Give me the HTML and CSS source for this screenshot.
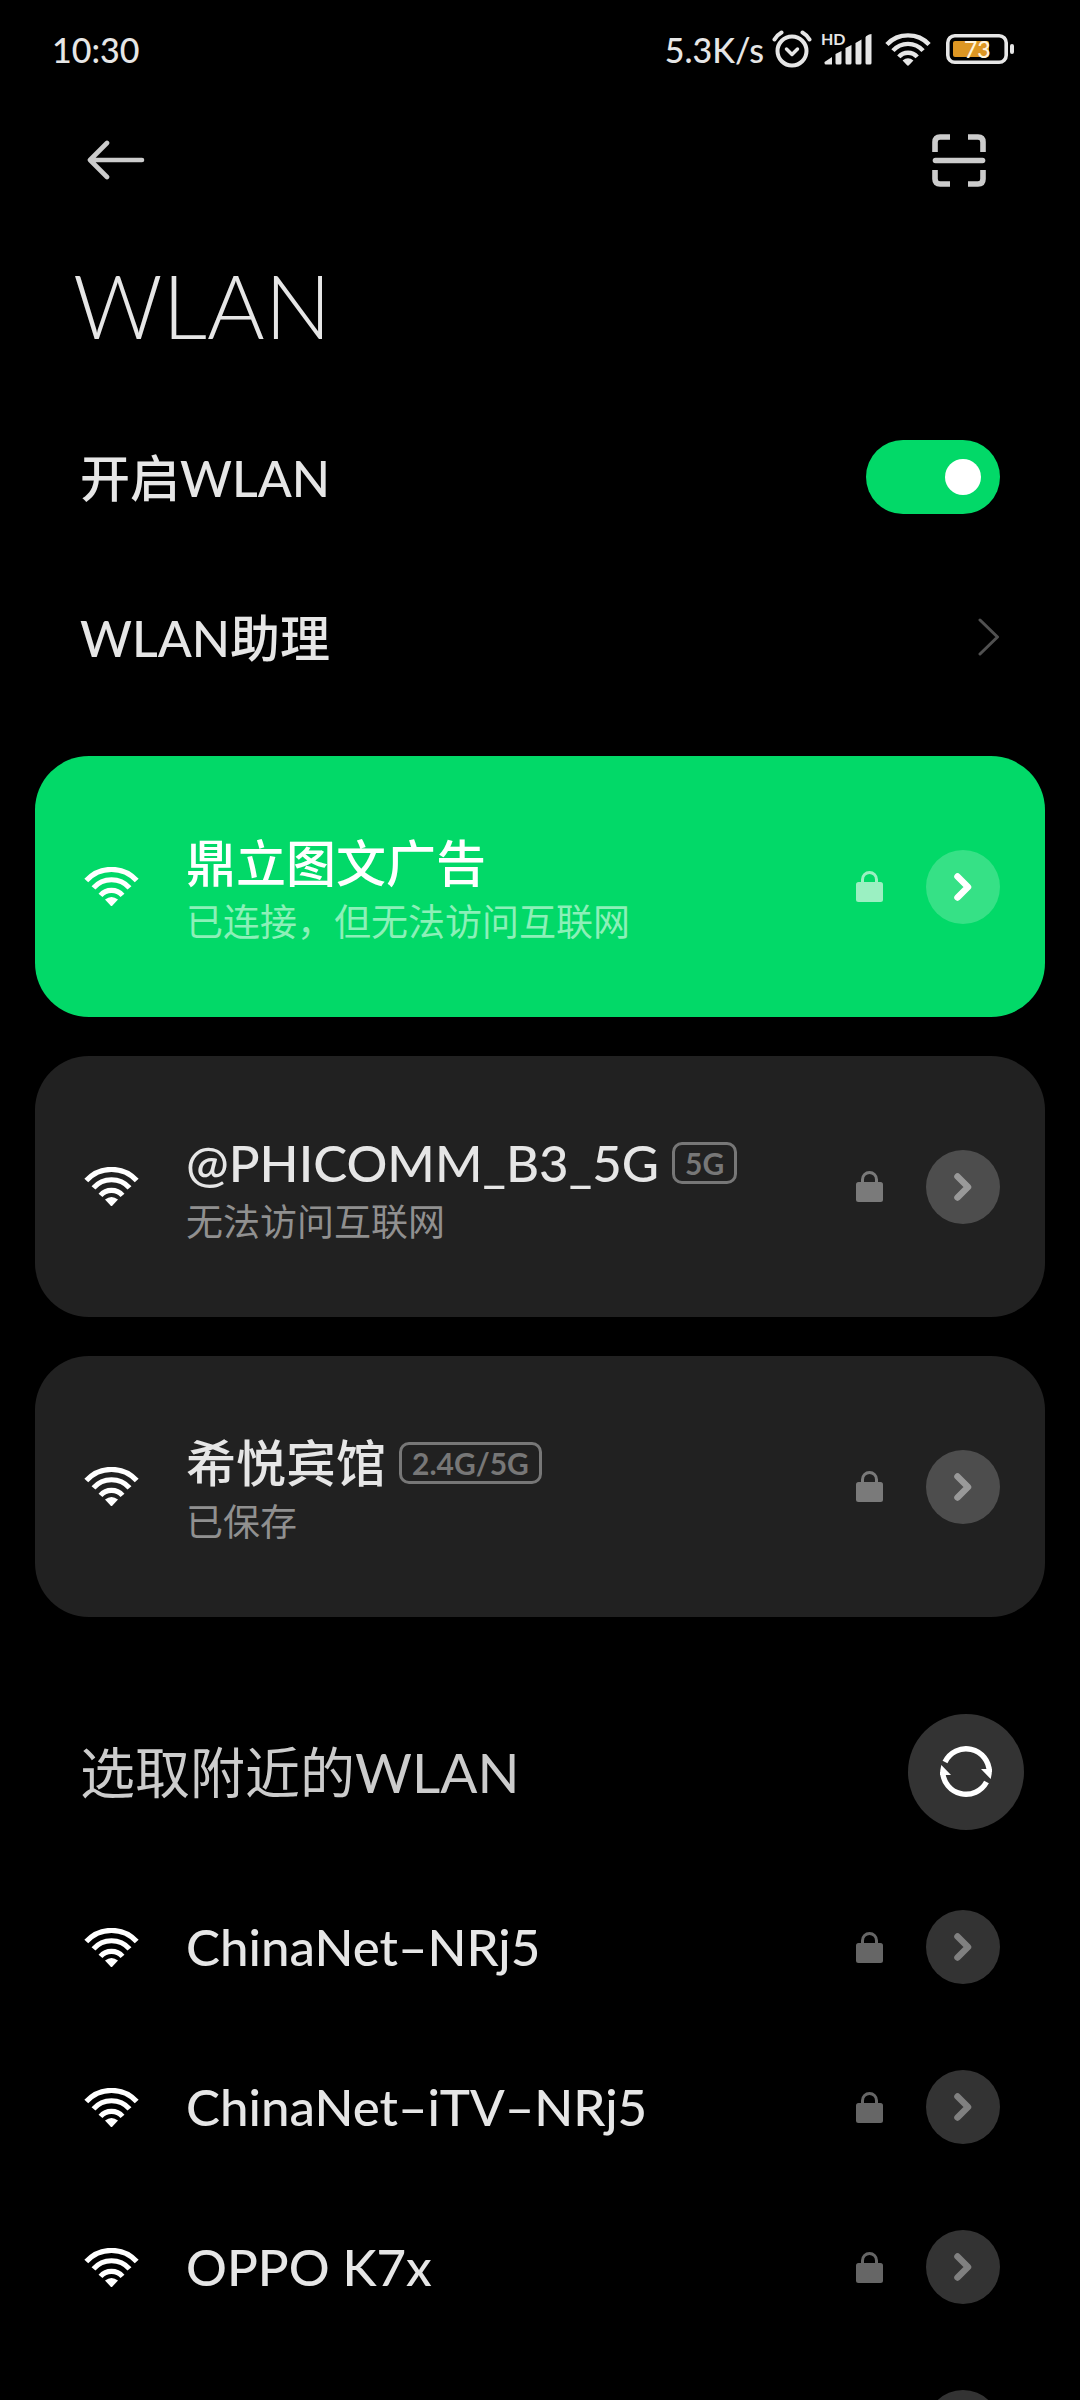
FILE: index.html
```html
<!DOCTYPE html>
<html lang="zh-CN">
<head>
<meta charset="utf-8">
<meta name="viewport" content="width=device-width, initial-scale=1">
<title>WLAN</title>
<link rel="stylesheet" href="styles.css">
</head>
<body>
<svg class="sprite" aria-hidden="true">
  <symbol id="wifi" viewBox="0 0 55 39">
    <path d="M2.3 13.6A34 34 0 0 1 52.7 13.6M9.5 20.9A24 24 0 0 1 45.5 20.9M16.5 28.4A14.5 14.5 0 0 1 38.5 28.4" fill="none" stroke="currentColor" stroke-width="5.2"/>
    <path d="M21 32.6Q27.500 27.400 34 32.6L27.500 39.500Z" fill="currentColor"/>
  </symbol>
  <symbol id="lock" viewBox="0 0 27 31">
    <rect y="11" width="27" height="20" rx="2.500" fill="currentColor"/>
    <path d="M6.500 11V8.500a7 7 0 0 1 14 0V11" fill="none" stroke="currentColor" stroke-width="3"/>
  </symbol>
  <symbol id="more" viewBox="0 0 18 28">
    <path d="M3.500 3.500L14 14L3.500 24.500" fill="none" stroke="currentColor" stroke-width="6.5" stroke-linecap="round" stroke-linejoin="round"/>
  </symbol>
</svg>
<div class="screen">
  <header class="status">
    <time class="clock">10:30</time>
    <div class="indicators">
      <span class="speed">5.3K/s</span>
      <svg class="alarm" viewBox="0 0 40 38" fill="none" stroke="currentColor">
        <circle cx="20" cy="21" r="14.500" stroke-width="4"/>
        <path d="M2.500 9.500Q5 5 9.500 2.500M37.500 9.500Q35 5 30.500 2.500" stroke-width="4" stroke-linecap="round"/>
        <path d="M14.500 19L20 24.500L25.500 19" stroke-width="3.500" stroke-linecap="round" stroke-linejoin="round"/>
      </svg>
      <svg class="signal" viewBox="0 0 50 34" fill="currentColor">
        <text class="hd" x="-1" y="13">HD</text>
        <path d="M2.500 30L10 25V32.500H4Q2.500 32.500 2.500 31ZM13.500 22L19.500 19V31Q19.500 32.500 18 32.500H15Q13.500 32.500 13.500 31ZM23.500 16L29.500 13V31Q29.500 32.500 28 32.500H25Q23.500 32.500 23.500 31ZM33.500 11L39.500 7.500V31Q39.500 32.500 38 32.500H35Q33.500 32.500 33.500 31ZM43.500 5.500Q44 3 49.500 2V31Q49.500 32.500 48 32.500H45Q43.500 32.500 43.500 31Z"/>
      </svg>
      <svg class="wifi-small" viewBox="0 0 55 39"><use href="#wifi"/></svg>
      <svg class="battery" viewBox="0 0 68 30">
        <rect x="1.800" y="1.800" width="58.400" height="26.400" rx="7" fill="none" stroke="currentColor" stroke-width="3.600"/>
        <rect x="64" y="10" width="4" height="10" rx="2" fill="currentColor"/>
        <rect x="7" y="7" width="36" height="16" rx="2" fill="#dd9623"/>
        <text class="level" x="18" y="23.500">73</text>
      </svg>
    </div>
  </header>

  <nav class="toolbar">
    <button class="tool" type="button" aria-label="返回">
      <svg class="back" viewBox="0 0 58 40"><path d="M20 3L3 20L20 37M4 20H55" fill="none" stroke="currentColor" stroke-width="4.600" stroke-linecap="round" stroke-linejoin="round"/></svg>
    </button>
    <button class="tool" type="button" aria-label="扫一扫">
      <svg class="scan" viewBox="0 0 54 53" fill="none" stroke="currentColor" stroke-width="5.600"><path d="M3 18V8Q3 3 8 3H18M36 3H46Q51 3 51 8V18M51 36V45Q51 50 46 50H36M18 50H8Q3 50 3 45V36"/><path d="M3.500 26.500H50.500" stroke-linecap="round"/></svg>
    </button>
  </nav>

  <main class="content">
    <h1 class="title">WLAN</h1>

    <div class="setting">
      <label class="setting-name" for="wlan-on">开启WLAN</label>
      <input class="switch" id="wlan-on" type="checkbox" role="switch" checked>
    </div>
    <a class="setting" href="#assistant">
      <span class="setting-name">WLAN助理</span>
      <svg class="chevron" viewBox="0 0 22 38"><path d="M2 2L19.500 19L2 36" fill="none" stroke="currentColor" stroke-width="3" stroke-linecap="round" stroke-linejoin="round"/></svg>
    </a>

    <ul class="known">
      <li class="network card connected">
        <svg class="wifi"><use href="#wifi"/></svg>
        <div class="info">
          <div class="name">鼎立图文广告</div>
          <div class="state">已连接，但无法访问互联网</div>
        </div>
        <svg class="lock"><use href="#lock"/></svg>
        <button class="details" type="button" aria-label="网络详情"><svg class="more"><use href="#more"/></svg></button>
      </li>
      <li class="network card">
        <svg class="wifi"><use href="#wifi"/></svg>
        <div class="info">
          <div class="name latin">@PHICOMM_B3_5G <span class="band">5G</span></div>
          <div class="state">无法访问互联网</div>
        </div>
        <svg class="lock"><use href="#lock"/></svg>
        <button class="details" type="button" aria-label="网络详情"><svg class="more"><use href="#more"/></svg></button>
      </li>
      <li class="network card">
        <svg class="wifi"><use href="#wifi"/></svg>
        <div class="info">
          <div class="name">希悦宾馆 <span class="band">2.4G/5G</span></div>
          <div class="state">已保存</div>
        </div>
        <svg class="lock"><use href="#lock"/></svg>
        <button class="details" type="button" aria-label="网络详情"><svg class="more"><use href="#more"/></svg></button>
      </li>
    </ul>

    <div class="section">
      <h2 class="heading">选取附近的WLAN</h2>
      <button class="refresh" type="button" aria-label="刷新">
        <svg class="refresh-icon" viewBox="0 0 52 52"><path d="M5 16A23.300 23.300 0 0 1 49.300 26M2.700 26A23.300 23.300 0 0 0 46.500 36" fill="none" stroke="currentColor" stroke-width="5.400"/><path d="M41 23H52Q52 28 50.700 33ZM11 29H0Q0 24 1.300 19Z" fill="currentColor"/></svg>
      </button>
    </div>

    <ul class="nearby">
      <li class="network">
        <svg class="wifi"><use href="#wifi"/></svg>
        <div class="name latin">ChinaNet–NRj5</div>
        <svg class="lock"><use href="#lock"/></svg>
        <button class="details" type="button" aria-label="网络详情"><svg class="more"><use href="#more"/></svg></button>
      </li>
      <li class="network">
        <svg class="wifi"><use href="#wifi"/></svg>
        <div class="name latin">ChinaNet–iTV–NRj5</div>
        <svg class="lock"><use href="#lock"/></svg>
        <button class="details" type="button" aria-label="网络详情"><svg class="more"><use href="#more"/></svg></button>
      </li>
      <li class="network">
        <svg class="wifi"><use href="#wifi"/></svg>
        <div class="name latin">OPPO K7x</div>
        <svg class="lock"><use href="#lock"/></svg>
        <button class="details" type="button" aria-label="网络详情"><svg class="more"><use href="#more"/></svg></button>
      </li>
      <li class="network">
        <svg class="wifi"><use href="#wifi"/></svg>
        <div class="name"></div>
        <svg class="lock"><use href="#lock"/></svg>
        <button class="details" type="button" aria-label="网络详情"><svg class="more"><use href="#more"/></svg></button>
      </li>
    </ul>
  </main>
</div>
</body>
</html>
```
FILE: styles.css
```css
* {
  box-sizing: border-box;
}

body {
  margin: 0;
  background: #000;
  color: #e6e6e6;
  font-family: Lato, "Noto Sans CJK SC", sans-serif;
  font-weight: 500;
}

h1,
h2,
ul {
  margin: 0;
  padding: 0;
}

ul {
  list-style: none;
}

button {
  display: flex;
  align-items: center;
  justify-content: center;
  flex: none;
  padding: 0;
  border: 0;
  background: none;
  color: inherit;
}

svg {
  display: block;
  flex: none;
}

.sprite {
  position: absolute;
  width: 0;
  height: 0;
}

.screen {
  display: flex;
  flex-direction: column;
  height: 100vh;
}

/* Status bar */
.status {
  display: flex;
  flex: none;
  align-items: center;
  justify-content: space-between;
  height: 98px;
  padding: 0 66px 0 52px;
  font-size: 34px;
}

.indicators {
  display: flex;
  align-items: center;
}

.speed {
  margin-right: 8px;
}

.alarm {
  width: 40px;
  height: 38px;
  margin-right: 10px;
}

.signal {
  width: 50px;
  height: 34px;
  margin-right: 13px;
  overflow: visible;
}

.hd {
  font-size: 16px;
  font-weight: 700;
}

.wifi-small {
  width: 46px;
  height: 33px;
  margin-right: 15px;
}

.battery {
  width: 68px;
  height: 30px;
}

.level {
  font-size: 23px;
  font-weight: 500;
  fill: #fff3dc;
}

/* Toolbar */
.toolbar {
  display: flex;
  flex: none;
  align-items: center;
  justify-content: space-between;
  height: 124px;
  padding: 0 94px 0 87px;
  color: #ccc;
}

.back {
  width: 58px;
  height: 40px;
}

.scan {
  width: 54px;
  height: 53px;
}

/* Scrolling content */
.content {
  flex: 1;
  min-height: 0;
  overflow-y: auto;
  scrollbar-width: none;
}

.title {
  padding: 28px 73px 37px;
  font-size: 88px;
  font-weight: 300;
  line-height: 110px;
}

.setting {
  display: flex;
  align-items: center;
  justify-content: space-between;
  height: 160px;
  padding: 0 80px;
  color: inherit;
  font-size: 50px;
  text-decoration: none;
}

.setting-name {
  padding-bottom: 5px;
}

.switch {
  appearance: none;
  display: flex;
  align-items: center;
  justify-content: flex-end;
  width: 134px;
  height: 74px;
  margin: 0;
  padding: 0 19px;
  border-radius: 37px;
  background: #333;
}

.switch:checked {
  background: #02d968;
}

.switch::before {
  content: "";
  width: 36px;
  height: 36px;
  border-radius: 50%;
  background: #fff;
}

.chevron {
  width: 22px;
  height: 38px;
  color: #505050;
}

/* Networks */
.known {
  display: grid;
  gap: 39px;
  padding: 39px 35px 0;
}

.network {
  display: flex;
  align-items: center;
  height: 160px;
  padding: 0 80px 0 84px;
}

.card {
  height: 261px;
  padding: 0 45px 0 49px;
  border-radius: 54px;
  background: #212121;
}

.wifi {
  width: 55px;
  height: 39px;
  margin-right: 47px;
  color: #fff;
}

.info {
  flex: 1;
  padding-top: 6px;
}

.name {
  display: flex;
  flex: 1;
  align-items: center;
  gap: 13px;
  font-size: 50px;
  line-height: 64px;
  white-space: nowrap;
}

.latin {
  font-size: 51px;
}

.band {
  height: 42px;
  padding: 0 10px;
  border: 3px solid #777;
  border-radius: 10px;
  color: #777;
  font-size: 30px;
  font-weight: 700;
  line-height: 36px;
}

.state {
  color: #909090;
  font-size: 37px;
  font-weight: 400;
  line-height: 54px;
}

.lock {
  width: 27px;
  height: 31px;
  margin-right: 43px;
  color: #666;
}

.details {
  width: 74px;
  height: 74px;
  border-radius: 50%;
  background: #333;
  color: #808080;
}

.more {
  width: 18px;
  height: 28px;
}

.card .lock {
  color: #7a7a7a;
}

.card .details {
  background: #4d4d4d;
  color: #999;
}

.connected {
  background: #02d968;
  color: #fff;
}

.connected .state {
  color: #8cf0b8;
}

.connected .lock {
  color: #9bf0c2;
}

.connected .details {
  background: #36e186;
  color: #fff;
}

.section {
  display: flex;
  align-items: center;
  justify-content: space-between;
  padding: 97px 56px 37px 80px;
}

.heading {
  color: #ccc;
  font-size: 55px;
  font-weight: 400;
  line-height: 80px;
}

.refresh {
  width: 116px;
  height: 116px;
  border-radius: 50%;
  background: #333;
  color: #fff;
}

.refresh-icon {
  width: 52px;
  height: 52px;
}
```
